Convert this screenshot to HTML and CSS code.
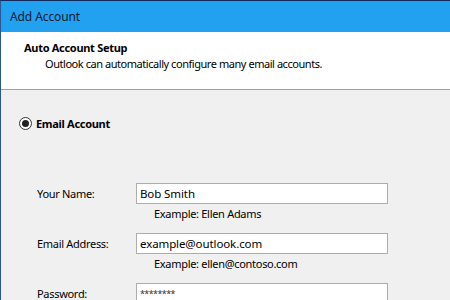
FILE: index.html
```html
<!DOCTYPE html>
<html lang="en">
<head>
    <meta charset="UTF-8">
    <title>Add Account</title>
    <link rel="stylesheet" href="styles.css">
</head>
<body>
    <div class="window">
        <div class="titlebar">Add Account</div>
        <div class="header">
            <div class="header-title">Auto Account Setup</div>
            <div class="header-sub">Outlook can automatically configure many email accounts.</div>
        </div>
        <div class="content">
            <label class="radio-row">
                <span class="radio"><span class="dot"></span></span>
                <span class="radio-label">Email Account</span>
            </label>

            <div class="form">
                <div class="field">
                    <span class="field-label">Your Name:</span>
                    <input class="field-input" type="text" value="Bob Smith">
                </div>
                <div class="hint">Example: Ellen Adams</div>

                <div class="field">
                    <span class="field-label">Email Address:</span>
                    <input class="field-input" type="text" value="example@outlook.com">
                </div>
                <div class="hint">Example: ellen@contoso.com</div>

                <div class="field">
                    <span class="field-label">Password:</span>
                    <input class="field-input password" type="text" value="********">
                </div>
            </div>
        </div>
    </div>
</body>
</html>
```

FILE: styles.css
```css
body {
    margin: 0;
    padding: 0;
    font-family: "Noto Sans", "Open Sans", sans-serif;
    font-size: 11px;
    letter-spacing: -0.3px;
    color: #000;
    overflow: hidden;
}

.window {
    width: 450px;
    height: 300px;
    box-sizing: border-box;
    border-top: 1px solid #0f2a5c;
    border-left: 1px solid #2b5797;
    background-color: #f0f0f0;
}

.titlebar {
    height: 31px;
    line-height: 31px;
    padding-left: 9px;
    background-color: #22a1f0;
    color: #0b1a33;
    font-size: 12px;
    letter-spacing: -0.1px;
}

.header {
    height: 49px;
    background-color: #ffffff;
    border-bottom: 1px solid #a0a0a0;
    padding-top: 8px;
}

.header-title {
    font-weight: bold;
    padding-left: 23px;
    line-height: 16px;
}

.header-sub {
    padding-left: 44px;
    line-height: 15px;
    letter-spacing: -0.45px;
}

.content {
    padding-top: 24px;
}

.radio-row {
    display: flex;
    align-items: center;
    padding-left: 18px;
    height: 18px;
}

.radio {
    width: 11px;
    height: 11px;
    border: 1px solid #333;
    border-radius: 50%;
    background-color: #fff;
    display: flex;
    align-items: center;
    justify-content: center;
    margin-right: 4px;
}

.dot {
    width: 7px;
    height: 7px;
    border-radius: 50%;
    background-color: #222;
}

.radio-label {
    font-weight: bold;
}

.form {
    padding-top: 50px;
}

.field {
    display: flex;
    align-items: center;
    height: 22px;
}

.field-label {
    width: 99px;
    padding-left: 36px;
}

.field-input {
    width: 252px;
    height: 21px;
    box-sizing: border-box;
    border: 1px solid #adadad;
    padding: 0 3px;
    font-family: inherit;
    font-size: 11.5px;
    letter-spacing: -0.1px;
    outline: none;
}

.password {
    font-size: 9px;
    letter-spacing: -0.6px;
    color: #333;
}

.hint {
    padding-left: 153px;
    height: 20px;
    line-height: 20px;
    margin-bottom: 8px;
}
```
